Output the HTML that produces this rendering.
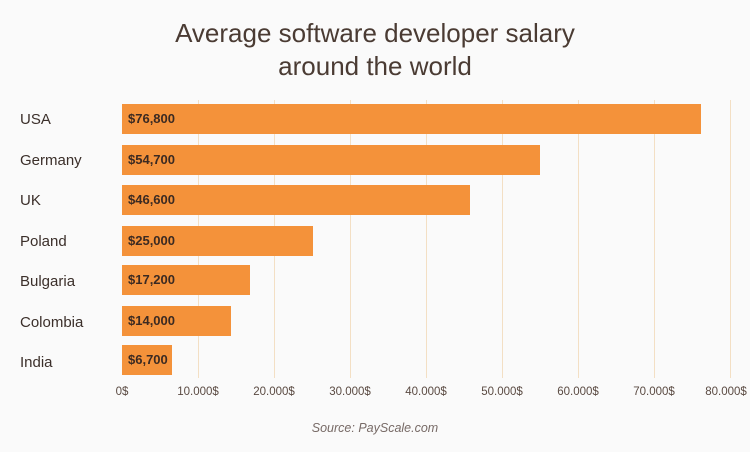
<!DOCTYPE html>
<html><head><style>
body{margin:0;width:750px;height:452px;background:#fafafa;font-family:"Liberation Sans",sans-serif;position:relative;overflow:hidden;color:#3b2f2a}
.t{position:absolute;left:0;width:750px;text-align:center;font-size:26px;color:#4a3b33;line-height:33px;top:17px}
.g{position:absolute;top:100px;height:278px;width:1px;background:#f3dfc4}
.bar{position:absolute;left:122px;height:30px;background:#f4923a;font-size:13px;font-weight:bold;color:#3b2a22;line-height:30px;padding-left:6px;box-sizing:border-box}
.l{position:absolute;left:20px;font-size:15px;color:#3b2f2a}
.ax{position:absolute;top:386px;font-size:11.5px;color:#5a4a42;transform:translateX(-50%)}
.s{position:absolute;top:421px;left:0;width:750px;text-align:center;font-size:12.5px;font-style:italic;color:#776a66}
</style></head><body>
<div class="t">Average software developer salary<br>around the world</div>
<div class="g" style="left:198px"></div><div class="g" style="left:274px"></div><div class="g" style="left:350px"></div><div class="g" style="left:426px"></div><div class="g" style="left:502px"></div><div class="g" style="left:578px"></div><div class="g" style="left:654px"></div><div class="g" style="left:730px"></div>
<div class="l" style="top:111px">USA</div><div class="bar" style="top:104px;width:579px">$76,800</div>
<div class="l" style="top:152px">Germany</div><div class="bar" style="top:145px;width:418px">$54,700</div>
<div class="l" style="top:192px">UK</div><div class="bar" style="top:185px;width:348px">$46,600</div>
<div class="l" style="top:233px">Poland</div><div class="bar" style="top:226px;width:191px">$25,000</div>
<div class="l" style="top:273px">Bulgaria</div><div class="bar" style="top:265px;width:128px">$17,200</div>
<div class="l" style="top:314px">Colombia</div><div class="bar" style="top:306px;width:109px">$14,000</div>
<div class="l" style="top:354px">India</div><div class="bar" style="top:345px;width:50px">$6,700</div>
<div class="ax" style="left:122px">0$</div><div class="ax" style="left:198px">10.000$</div><div class="ax" style="left:274px">20.000$</div><div class="ax" style="left:350px">30.000$</div><div class="ax" style="left:426px">40.000$</div><div class="ax" style="left:502px">50.000$</div><div class="ax" style="left:578px">60.000$</div><div class="ax" style="left:654px">70.000$</div><div class="ax" style="left:726px">80.000$</div>
<div class="s">Source: PayScale.com</div>
</body></html>
